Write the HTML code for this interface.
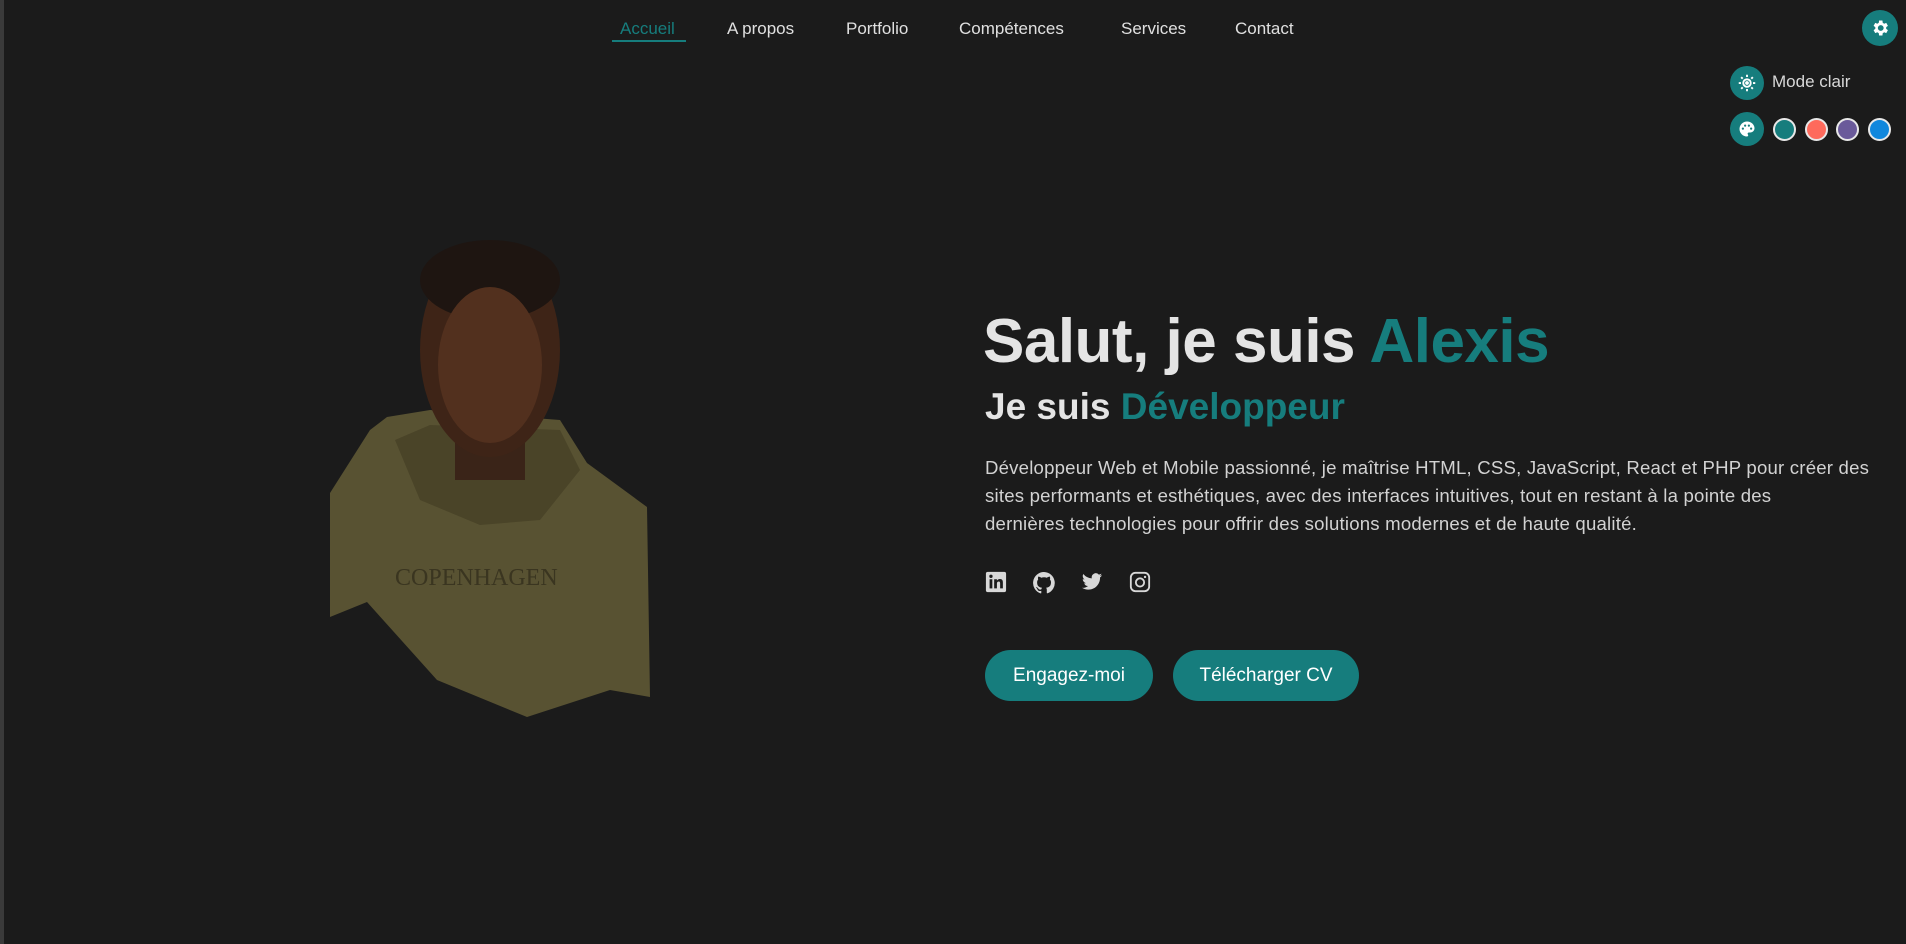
<!DOCTYPE html>
<html><head><meta charset="utf-8"><style>
*{margin:0;padding:0;box-sizing:border-box}
body{width:1906px;height:944px;background:#1b1b1b;font-family:"Liberation Sans",sans-serif;color:#e6e6e6;position:relative;overflow:hidden}
.edge{position:absolute;left:0;top:0;width:4px;height:944px;background:#3a3a3a}
nav a{position:absolute;top:19px;font-size:17px;color:#e0e0e0;text-decoration:none}
.teal{color:#167d7d}
.circ{position:absolute;border-radius:50%;background:#167d7d;display:flex;align-items:center;justify-content:center}
.sw{position:absolute;top:118px;width:23px;height:23px;border-radius:50%;border:2px solid #e8e8e8}
h1{position:absolute;left:983px;top:306px;font-size:62px;font-weight:bold;color:#e4e4e4;letter-spacing:-0.5px;white-space:nowrap}
h2{position:absolute;left:985px;top:386px;font-size:37px;font-weight:bold;color:#e4e4e4;white-space:nowrap}
p{position:absolute;left:985px;top:454px;white-space:nowrap;font-size:18.6px;letter-spacing:0.2px;line-height:28px;color:#d2d2d2}
.btn{position:absolute;top:650px;height:51px;border-radius:26px;background:#167d7d;color:#fff;font-size:19px;display:flex;align-items:center;justify-content:center}
.ic{position:absolute;top:571px}
</style></head><body>
<div class="edge"></div>
<nav>
<a style="left:620px;color:#167d7d">Accueil</a>
<div style="position:absolute;left:612px;top:40px;width:74px;height:2px;background:#167d7d"></div>
<a style="left:727px">A propos</a>
<a style="left:846px">Portfolio</a>
<a style="left:959px">Compétences</a>
<a style="left:1121px">Services</a>
<a style="left:1235px">Contact</a>
</nav>
<div class="circ" style="left:1862px;top:10px;width:36px;height:36px">
<svg width="20" height="20" viewBox="0 0 24 24"><path fill="#fff" d="M19.4 13a7.5 7.5 0 0 0 0-2l2.1-1.6-2-3.5-2.5 1a7 7 0 0 0-1.7-1L14.9 3h-4l-.4 2.9a7 7 0 0 0-1.7 1l-2.5-1-2 3.5L6.4 11a7.5 7.5 0 0 0 0 2l-2.1 1.6 2 3.5 2.5-1a7 7 0 0 0 1.7 1l.4 2.9h4l.4-2.9a7 7 0 0 0 1.7-1l2.5 1 2-3.5zM12.9 15.5a3.5 3.5 0 1 1 0-7 3.5 3.5 0 0 1 0 7z"/></svg></div>
<div class="circ" style="left:1730px;top:66px;width:34px;height:34px">
<svg width="18" height="18" viewBox="0 0 24 24"><circle cx="12" cy="12" r="5" fill="none" stroke="#fff" stroke-width="2.5"/><circle cx="12" cy="12" r="2.5" fill="#fff"/><g stroke="#fff" stroke-width="2.5"><path d="M12 1v3M12 20v3M1 12h3M20 12h3M4.2 4.2l2.1 2.1M17.7 17.7l2.1 2.1M4.2 19.8l2.1-2.1M17.7 6.3l2.1-2.1"/></g></svg></div>
<div style="position:absolute;left:1772px;top:72px;font-size:17px;color:#d8d8d8">Mode clair</div>
<div class="circ" style="left:1730px;top:112px;width:34px;height:34px">
<svg width="18" height="18" viewBox="0 0 24 24"><path fill="#fff" d="M12 2C6.5 2 2 6.5 2 12s4.5 10 10 10c1 0 1.6-.8 1.6-1.6 0-.4-.2-.8-.4-1.1-.3-.3-.4-.6-.4-1.1 0-.9.7-1.6 1.6-1.6h2c3 0 5.6-2.5 5.6-5.6C22 6 17.5 2 12 2zM6.5 13a1.5 1.5 0 1 1 0-3 1.5 1.5 0 0 1 0 3zm3-4a1.5 1.5 0 1 1 0-3 1.5 1.5 0 0 1 0 3zm5 0a1.5 1.5 0 1 1 0-3 1.5 1.5 0 0 1 0 3zm3 4a1.5 1.5 0 1 1 0-3 1.5 1.5 0 0 1 0 3z"/></svg></div>
<div class="sw" style="left:1773px;background:#167d7d"></div>
<div class="sw" style="left:1805px;background:#fe6a5c"></div>
<div class="sw" style="left:1836px;background:#6a5a9a"></div>
<div class="sw" style="left:1868px;background:#1087dd"></div>

<svg style="position:absolute;left:0;top:0" width="700" height="760">
<polygon fill="#585232" points="330,493 370,430 387,417 430,410 560,420 587,463 647,507 650,697 610,690 527,717 437,680 367,602 330,617"/>
<polygon fill="#4a4428" points="395,440 430,425 560,430 580,470 540,520 480,525 420,500"/>
<rect x="455" y="400" width="70" height="80" fill="#3a2418"/>
<ellipse cx="490" cy="350" rx="70" ry="107" fill="#3e2417"/>
<ellipse cx="490" cy="280" rx="70" ry="40" fill="#1e1511"/>
<ellipse cx="490" cy="365" rx="52" ry="78" fill="#52301e"/>
<text x="395" y="585" font-family="Liberation Serif" font-size="24" fill="#3a3520">COPENHAGEN</text>
</svg>

<h1>Salut, je suis <span class="teal">Alexis</span></h1>
<h2>Je suis <span class="teal">Développeur</span></h2>
<p>Développeur Web et Mobile passionné, je maîtrise HTML, CSS, JavaScript, React et PHP pour créer des<br>sites performants et esthétiques, avec des interfaces intuitives, tout en restant à la pointe des<br>dernières technologies pour offrir des solutions modernes et de haute qualité.</p>
<svg class="ic" style="left:985px" width="22" height="22" viewBox="0 0 24 24"><rect x="1" y="1" width="22" height="22" rx="2" fill="#d8d8d8"/><g fill="#1b1b1b"><rect x="5" y="9" width="3" height="10"/><circle cx="6.5" cy="5.8" r="1.8"/><path d="M10 9h3v1.5c.6-1 1.8-1.8 3.3-1.8 2.5 0 3.2 1.6 3.2 4V19h-3v-5.5c0-1.2-.4-2-1.5-2s-2 .9-2 2.1V19h-3z"/></g></svg>
<svg class="ic" style="left:1032px" width="24" height="24" viewBox="0 0 24 24"><path fill="#d8d8d8" d="M12 1a11 11 0 0 0-3.5 21.4c.6.1.8-.2.8-.5v-2c-3 .7-3.7-1.3-3.7-1.3-.5-1.3-1.2-1.6-1.2-1.6-1-.7.1-.7.1-.7 1.1.1 1.7 1.1 1.7 1.1 1 1.7 2.6 1.2 3.2.9.1-.7.4-1.2.7-1.5-2.4-.3-5-1.2-5-5.4 0-1.2.4-2.2 1.1-2.9-.1-.3-.5-1.4.1-2.9 0 0 .9-.3 3 1.1a10 10 0 0 1 5.5 0c2.1-1.4 3-1.1 3-1.1.6 1.5.2 2.6.1 2.9.7.8 1.1 1.7 1.1 2.9 0 4.2-2.6 5.1-5 5.4.4.3.8 1 .8 2v3c0 .3.2.6.8.5A11 11 0 0 0 12 1z"/></svg>
<svg class="ic" style="left:1080px" width="24" height="22" viewBox="0 0 24 24"><path fill="#d8d8d8" d="M23 4.6a9 9 0 0 1-2.6.7 4.5 4.5 0 0 0 2-2.5 9 9 0 0 1-2.9 1.1A4.5 4.5 0 0 0 11.8 8 12.8 12.8 0 0 1 2.5 3.3a4.5 4.5 0 0 0 1.4 6 4.5 4.5 0 0 1-2-.6 4.5 4.5 0 0 0 3.6 4.5 4.5 4.5 0 0 1-2 .1 4.5 4.5 0 0 0 4.2 3.1A9 9 0 0 1 1 18.3 12.8 12.8 0 0 0 8 20.3c8.3 0 12.8-6.9 12.8-12.8v-.6A9 9 0 0 0 23 4.6z"/></svg>
<svg class="ic" style="left:1129px" width="22" height="22" viewBox="0 0 24 24"><rect x="2" y="2" width="20" height="20" rx="5" fill="none" stroke="#d8d8d8" stroke-width="2"/><circle cx="12" cy="12.5" r="4.5" fill="none" stroke="#d8d8d8" stroke-width="2"/><circle cx="17.5" cy="6.5" r="1.3" fill="#d8d8d8"/></svg>
<div class="btn" style="left:985px;width:168px">Engagez-moi</div>
<div class="btn" style="left:1173px;width:186px">Télécharger CV</div>
</body></html>
